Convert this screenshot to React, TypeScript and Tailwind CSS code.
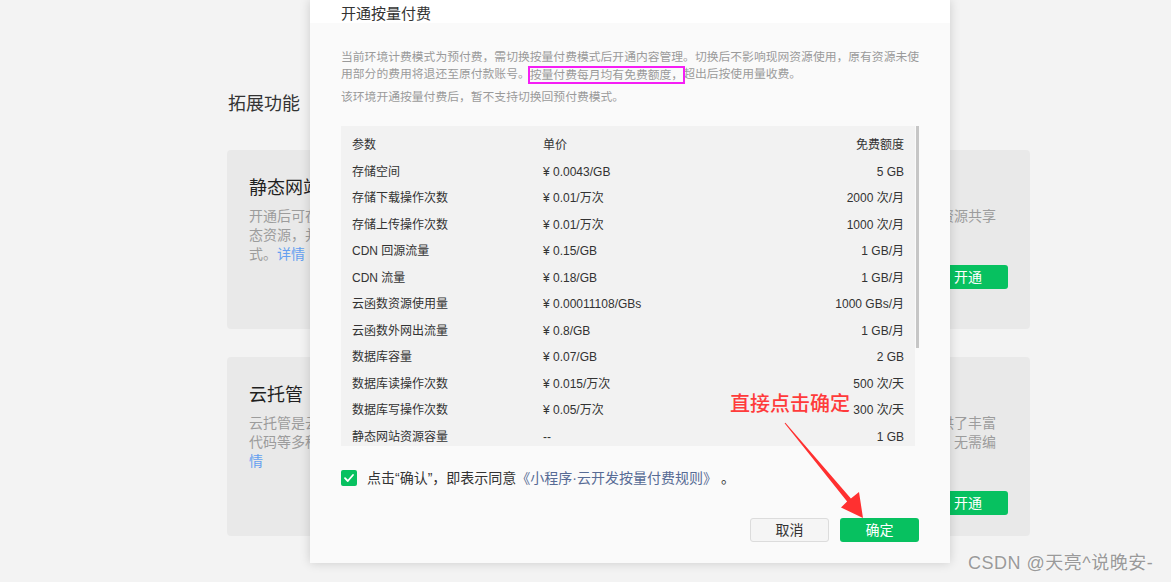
import React from "react";

const rows: [string, string, string][] = [
  ["存储空间", "¥ 0.0043/GB", "5 GB"],
  ["存储下载操作次数", "¥ 0.01/万次", "2000 次/月"],
  ["存储上传操作次数", "¥ 0.01/万次", "1000 次/月"],
  ["CDN 回源流量", "¥ 0.15/GB", "1 GB/月"],
  ["CDN 流量", "¥ 0.18/GB", "1 GB/月"],
  ["云函数资源使用量", "¥ 0.00011108/GBs", "1000 GBs/月"],
  ["云函数外网出流量", "¥ 0.8/GB", "1 GB/月"],
  ["数据库容量", "¥ 0.07/GB", "2 GB"],
  ["数据库读操作次数", "¥ 0.015/万次", "500 次/天"],
  ["数据库写操作次数", "¥ 0.05/万次", "300 次/天"],
  ["静态网站资源容量", "--", "1 GB"],
  ["静态网站流量", "¥ 0.18/GB", "1 GB/月"],
  ["静态网站资源下载", "¥ 0.01/万次", "2000 次/月"],
];

const FeatureCard = ({ title, lines }: { title: string; lines: React.ReactNode[] }) => (
  <div className="flex h-[179px] flex-col rounded-[4px] bg-[#e9e9e9] px-[22px] pt-[27px]">
    <div className="text-[18px] leading-[22px] text-[#1f1f1f]">{title}</div>
    <div className="mt-[8px] text-[14px] leading-[19px] text-[#9c9c9c]">
      {lines.map((l, i) => (
        <div key={i} className="whitespace-nowrap">
          {l}
        </div>
      ))}
    </div>
    <button className="mt-[20px] h-[24px] w-[80px] self-end rounded-[3px] bg-[#07c160] text-[14px] leading-[24px] text-white">
      开通
    </button>
  </div>
);

export default function App() {
  return (
    <div className="relative h-[582px] w-full overflow-hidden bg-[#f3f3f3] font-['Liberation_Sans','Noto_Sans_CJK_SC',sans-serif]">
      {/* page behind the dialog */}
      <div className="pl-[227px] pt-[93px]">
        <h2 className="pl-[1px] text-[18px] leading-[22px] text-[#333]">拓展功能</h2>
        <div className="mt-[35px] grid grid-cols-[392px_392px] gap-x-[19px] gap-y-[28px]">
          <FeatureCard
            title="静态网站"
            lines={[
              "开通后可在小程序、公众号等多个平台上托管网页及静",
              "态资源，并提供全球加速与自定义域名等访问方",
              <>
                式。<span className="text-[#64a0f0]">详情</span>
              </>,
            ]}
          />
          <FeatureCard
            title="环境共享"
            lines={["开通后可在多个小程序或公众号之间实现环境资源共享", "调用。"]}
          />
          <FeatureCard
            title="云托管"
            lines={[
              "云托管是云开发提供的容器服务，支持托管服务端、",
              <>
                代码等多种形式的后端服务，按需计费。
                <span className="text-[#64a0f0]">详</span>
              </>,
              <span className="text-[#64a0f0]">情</span>,
            ]}
          />
          <FeatureCard
            title="内容管理"
            lines={[
              "云托管是全托管的容器服务，支持长连接，提供了丰富",
              "的运行环境，可将镜像、代码等一键部署上线，无需编",
              "写运维脚本。",
            ]}
          />
        </div>
      </div>

      {/* dialog */}
      <div className="absolute left-[310px] top-0 flex h-[563px] w-[640px] flex-col bg-[#fafafa] shadow-[0_0_10px_rgba(0,0,0,0.16)]">
        <div className="h-[23px] bg-white pl-[31px] pt-[6px] text-[15px] leading-[16px] text-[#333]">
          开通按量付费
        </div>
        <div className="px-[31px] pt-[25.5px]">
          <p className="w-[584px] text-[11.8px] leading-[17px] text-[#9a9a9a]">
            当前环境计费模式为预付费，需切换按量付费模式后开通内容管理。切换后不影响现网资源使用，原有资源未使用部分的费用将退还至原付款账号。
            <span className="relative top-[1px] outline-2 outline-[#f51ef5]">按量付费每月均有免费额度，</span>
            超出后按使用量收费。
          </p>
          <p className="mt-[6px] text-[11.8px] leading-[17px] text-[#9a9a9a]">
            该环境开通按量付费后，暂不支持切换回预付费模式。
          </p>

          <div className="mt-[20.5px] flex items-start">
            <div className="h-[320px] w-[576px] overflow-hidden bg-[#f2f2f2] px-[11px] pt-[6px] text-[12px] text-[#333]">
              <div className="grid h-[26.5px] grid-cols-[191px_1fr_auto] items-center">
                <span>参数</span>
                <span>单价</span>
                <span>免费额度</span>
              </div>
              {rows.map(([name, price, free]) => (
                <div key={name} className="grid h-[26.5px] grid-cols-[191px_1fr_auto] items-center">
                  <span>{name}</span>
                  <span>{price}</span>
                  <span className="text-right">{free}</span>
                </div>
              ))}
            </div>
            <div className="ml-[1px] h-[222px] w-[3px] bg-[#c6c6c6]" />
          </div>

          <div className="mt-[22px] flex h-[20px] items-center">
            <span className="flex h-[16px] w-[16px] items-center justify-center rounded-[2px] bg-[#07c160]">
              <svg width="12" height="12" viewBox="0 0 12 12" fill="none">
                <path d="M2 6.2 4.8 9 10 3" stroke="white" strokeWidth="1.8" strokeLinecap="round" strokeLinejoin="round" />
              </svg>
            </span>
            <span className="ml-[10px] text-[14px] leading-[20px] text-[#333]">
              点击“确认”，即表示同意
              <span className="text-[#576b95]">《小程序·云开发按量付费规则》</span> 。
            </span>
          </div>
        </div>
        <div className="mt-[30px] flex justify-end gap-[11px] pr-[31px]">
          <button className="h-[24px] w-[79px] rounded-[3px] border border-[#dcdcdc] bg-[#f5f5f5] text-[14px] text-[#333]">
            取消
          </button>
          <button className="h-[24px] w-[79px] rounded-[3px] bg-[#07c160] text-[14px] text-white">确定</button>
        </div>
      </div>

      {/* annotation */}
      <div className="absolute left-[730px] top-[392px] text-[20px] font-medium leading-[24px] text-[#ff3b3b]">
        直接点击确定
      </div>
      <svg className="pointer-events-none absolute left-0 top-0" width="1171" height="582">
        <polygon
          points="785.4,422.7 850.9,498.4 859,492 863,518 841,507.5 847.1,501.6 784.6,423.3"
          fill="#ff3030"
        />
      </svg>

      <div className="absolute left-[968px] top-[551px] text-[18px] leading-[24px] tracking-[0.5px] text-[#9a9a9a] [text-shadow:0_0_2px_#fff]">
        CSDN @天亮^说晚安-
      </div>
    </div>
  );
}
